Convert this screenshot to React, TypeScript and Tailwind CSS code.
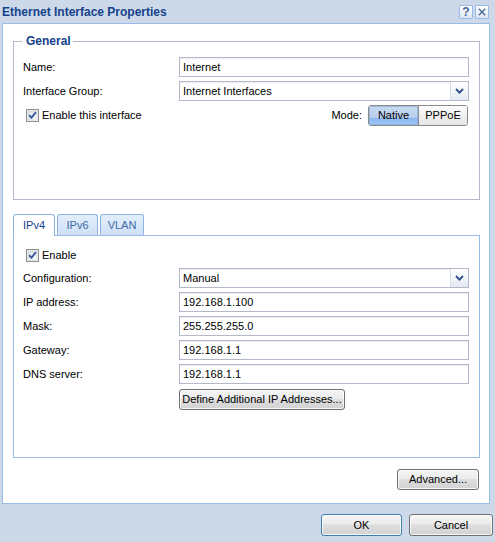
import React from "react";

const font = "font-['Liberation_Sans',Arial,sans-serif]";

function Check({ id }: { id: string }) {
  return (
    <svg width="13" height="13" viewBox="0 0 13 13" className="shrink-0">
      <defs>
        <linearGradient id={id} x1="0" y1="0" x2="1" y2="1">
          <stop offset="0" stopColor="#dcdfe5" />
          <stop offset="1" stopColor="#ffffff" />
        </linearGradient>
      </defs>
      <rect x="0.5" y="0.5" width="12" height="12" fill="#f4f4f4" stroke="#8e8f8f" />
      <rect x="2" y="2" width="9" height="9" fill={`url(#${id})`} stroke="#c3c8d0" strokeWidth="0.6" />
      <path d="M3.2 6.2 L5.4 8.8 L9.9 3.2" fill="none" stroke="#3b5ca0" strokeWidth="1.9" strokeLinejoin="round" />
    </svg>
  );
}

function TextInput({ value }: { value: string }) {
  return (
    <div className="h-[20px] border border-[#b5b8c8] bg-white shadow-[inset_0_1px_1px_rgba(0,0,0,0.07)] flex items-center pl-[3px] text-[11px] text-black leading-none">
      {value}
    </div>
  );
}

function Select({ value }: { value: string }) {
  return (
    <div className="h-[20px] border border-[#b5b8c8] bg-white shadow-[inset_0_1px_1px_rgba(0,0,0,0.07)] flex items-stretch text-[11px] text-black">
      <div className="flex-1 flex items-center pl-[3px] leading-none">{value}</div>
      <div className="w-[18px] border-l border-[#d5dbe4] bg-[linear-gradient(to_bottom,#ffffff,#e4e9f1)] flex items-center justify-center">
        <svg width="9" height="6" viewBox="0 0 9 6">
          <path d="M1 1 L4.5 4.6 L8 1" fill="none" stroke="#2d4f8c" strokeWidth="1.8" />
        </svg>
      </div>
    </div>
  );
}

function Btn({ children, w, primary }: { children: React.ReactNode; w: string; primary?: boolean }) {
  return (
    <div
      className={`${w} flex items-center justify-center rounded-[3px] border ${
        primary ? "border-[#3c7fb1]" : "border-[#707070]"
      } bg-[linear-gradient(to_bottom,#f4f4f4,#ececec_45%,#dedede_50%,#d2d2d2)] shadow-[inset_0_0_0_1px_rgba(255,255,255,0.8)] text-[11px] text-black leading-none`}
    >
      {children}
    </div>
  );
}

function Row({ label, children }: { label: string; children: React.ReactNode }) {
  return (
    <>
      <div className="h-[20px] flex items-center text-[11px] text-black leading-none">{label}</div>
      {children}
    </>
  );
}

export default function App() {
  return (
    <div className={`${font} w-[495px] h-[542px] bg-[#cdd9e8] flex flex-col overflow-hidden`}>
      {/* title bar */}
      <div className="h-[23px] flex items-center pl-[2px] pr-[6px]">
        <div className="text-[12px] font-bold text-[#15428b] leading-none">Ethernet Interface Properties</div>
        <div className="ml-auto flex gap-[2px]">
          <div className="w-[14px] h-[14px] border border-[#99bbe8] rounded-[1px] bg-[linear-gradient(to_bottom,#ffffff,#dbe5f3)] flex items-center justify-center text-[12px] font-bold text-[#4a6693] leading-none">
            ?
          </div>
          <div className="w-[14px] h-[14px] border border-[#99bbe8] rounded-[1px] bg-[linear-gradient(to_bottom,#ffffff,#dbe5f3)] flex items-center justify-center">
            <svg width="8" height="8" viewBox="0 0 8 8">
              <path d="M0.8 0.8 L7.2 7.2 M7.2 0.8 L0.8 7.2" stroke="#4a6693" strokeWidth="1.3" />
            </svg>
          </div>
        </div>
      </div>

      {/* main panel */}
      <div className="ml-[2px] w-[488px] h-[481px] border border-[#99bbe8] bg-white pl-[10px] pr-[9px] flex flex-col">
        {/* General fieldset */}
        <div className="relative mt-[17px] h-[159px] border border-[#b5b8c8] pt-[15px] pl-[9px] pr-[10px]">
          <span className="absolute -top-[8px] left-[8px] bg-white pl-[4px] pr-[2px] text-[12px] font-bold text-[#15428b] leading-[14px]">
            General
          </span>
          <div className="grid grid-cols-[156px_1fr] gap-y-[4px]">
            <Row label="Name:">
              <TextInput value="Internet" />
            </Row>
            <Row label="Interface Group:">
              <Select value="Internet Interfaces" />
            </Row>
          </div>
          <div className="mt-[4px] h-[21px] flex items-center justify-between">
            <div className="flex items-center gap-[3px] ml-[3px] text-[11px] text-black leading-none">
              <Check id="cb1" />
              <span>Enable this interface</span>
            </div>
            <div className="flex items-center gap-[6px] text-[11px] text-black leading-none mr-[1px]">
              <span>Mode:</span>
              <div className="flex h-[21px] w-[100px] border border-[#8a8a8a] rounded-[3px] overflow-hidden">
                <div className="w-[49px] flex items-center justify-center bg-[linear-gradient(to_bottom,#c8daf1,#b8ceed_62%,#8cb9f2_64%,#a0c6f5)] shadow-[inset_0_0_0_1px_rgba(120,160,210,0.5)]">
                  Native
                </div>
                <div className="flex-1 border-l border-[#8a8a8a] flex items-center justify-center bg-[linear-gradient(to_bottom,#fdfdfd,#f0f0f0_50%,#e6e6e6)]">
                  PPPoE
                </div>
              </div>
            </div>
          </div>
        </div>

        {/* tabs */}
        <div className="mt-[14px] h-[22px] flex items-end gap-[2px] border-b border-[#99bbe8] text-[11px] leading-none">
          <div className="w-[42px] h-[22px] -mb-px rounded-t-[3px] border border-b-0 border-[#8db2e3] bg-white flex items-center justify-center text-[#15428b] pb-[1px]">
            IPv4
          </div>
          <div className="w-[41px] h-[21px] rounded-t-[3px] border border-b-0 border-[#8db2e3] bg-[linear-gradient(to_bottom,#e3eefc,#cfe0f6)] flex items-center justify-center text-[#416aa3]">
            IPv6
          </div>
          <div className="w-[44px] h-[21px] rounded-t-[3px] border border-b-0 border-[#8db2e3] bg-[linear-gradient(to_bottom,#e3eefc,#cfe0f6)] flex items-center justify-center text-[#416aa3]">
            VLAN
          </div>
        </div>
        <div className="h-[222px] border-x border-b border-[#99bbe8] pt-[13px] pl-[9px] pr-[10px] flex flex-col">
          <div className="h-[13px] flex items-center gap-[3px] ml-[3px] text-[11px] text-black leading-none">
            <Check id="cb2" />
            <span>Enable</span>
          </div>
          <div className="mt-[6px] grid grid-cols-[156px_1fr] gap-y-[4px]">
            <Row label="Configuration:">
              <Select value="Manual" />
            </Row>
            <Row label="IP address:">
              <TextInput value="192.168.1.100" />
            </Row>
            <Row label="Mask:">
              <TextInput value="255.255.255.0" />
            </Row>
            <Row label="Gateway:">
              <TextInput value="192.168.1.1" />
            </Row>
            <Row label="DNS server:">
              <TextInput value="192.168.1.1" />
            </Row>
          </div>
          <div className="mt-[5px] pl-[156px] flex">
            <Btn w="w-[166px] h-[21px]">Define Additional IP Addresses...</Btn>
          </div>
        </div>
        <div className="mt-[11px] flex justify-end pr-[1px]">
          <Btn w="w-[82px] h-[21px]">Advanced...</Btn>
        </div>
      </div>

      {/* footer */}
      <div className="pt-[10px] flex justify-end gap-[7px] pr-[2px]">
        <Btn w="w-[81px] h-[22px]" primary>
          OK
        </Btn>
        <Btn w="w-[84px] h-[22px]">Cancel</Btn>
      </div>
    </div>
  );
}
